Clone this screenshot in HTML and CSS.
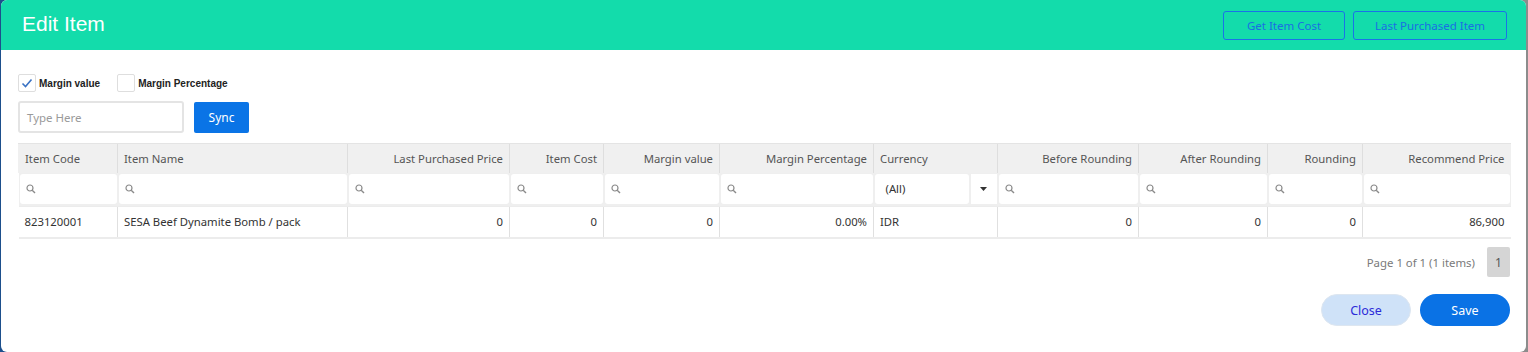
FILE: index.html
```html
<!DOCTYPE html>
<html>
<head>
<meta charset="utf-8">
<link rel="stylesheet" href="styles.css">
</head>
<body>
<div class="modal">
  <div class="modal-header">
    <h1 class="title">Edit Item</h1>
    <div class="header-actions">
      <button class="btn-outline btn-cost">Get Item Cost</button>
      <button class="btn-outline btn-last">Last Purchased Item</button>
    </div>
  </div>
  <div class="modal-body">
    <div class="checks">
      <label class="check">
        <span class="box">
          <svg width="14" height="14" viewBox="0 0 14 14"><path d="M2.5 7.5 L5.5 10.5 L11.5 3.5" fill="none" stroke="#3b73c4" stroke-width="1.6"/></svg>
        </span>
        <span class="check-label">Margin value</span>
      </label>
      <label class="check">
        <span class="box"></span>
        <span class="check-label">Margin Percentage</span>
      </label>
    </div>
    <div class="sync-row">
      <div class="text-input">Type Here</div>
      <button class="btn-sync">Sync</button>
    </div>
    <table class="grid">
      <colgroup>
        <col style="width:99px"><col style="width:230px"><col style="width:162px"><col style="width:94px"><col style="width:116px"><col style="width:154px"><col style="width:124px"><col style="width:141px"><col style="width:129px"><col style="width:95px"><col style="width:148px">
      </colgroup>
      <thead>
        <tr class="head">
          <th>Item Code</th>
          <th>Item Name</th>
          <th class="r">Last Purchased Price</th>
          <th class="r">Item Cost</th>
          <th class="r">Margin value</th>
          <th class="r">Margin Percentage</th>
          <th>Currency</th>
          <th class="r">Before Rounding</th>
          <th class="r">After Rounding</th>
          <th class="r">Rounding</th>
          <th class="r">Recommend Price</th>
        </tr>
        <tr class="filter">
          <td><div class="fbox"><svg class="mag" width="10" height="10" viewBox="0 0 10 10"><circle cx="4" cy="4" r="3" fill="none" stroke="#8a8a8a" stroke-width="1.2"/><path d="M6.2 6.2 L9 9" stroke="#8a8a8a" stroke-width="1.4"/></svg></div></td>
          <td><div class="fbox"><svg class="mag" width="10" height="10" viewBox="0 0 10 10"><circle cx="4" cy="4" r="3" fill="none" stroke="#8a8a8a" stroke-width="1.2"/><path d="M6.2 6.2 L9 9" stroke="#8a8a8a" stroke-width="1.4"/></svg></div></td>
          <td><div class="fbox"><svg class="mag" width="10" height="10" viewBox="0 0 10 10"><circle cx="4" cy="4" r="3" fill="none" stroke="#8a8a8a" stroke-width="1.2"/><path d="M6.2 6.2 L9 9" stroke="#8a8a8a" stroke-width="1.4"/></svg></div></td>
          <td><div class="fbox"><svg class="mag" width="10" height="10" viewBox="0 0 10 10"><circle cx="4" cy="4" r="3" fill="none" stroke="#8a8a8a" stroke-width="1.2"/><path d="M6.2 6.2 L9 9" stroke="#8a8a8a" stroke-width="1.4"/></svg></div></td>
          <td><div class="fbox"><svg class="mag" width="10" height="10" viewBox="0 0 10 10"><circle cx="4" cy="4" r="3" fill="none" stroke="#8a8a8a" stroke-width="1.2"/><path d="M6.2 6.2 L9 9" stroke="#8a8a8a" stroke-width="1.4"/></svg></div></td>
          <td><div class="fbox"><svg class="mag" width="10" height="10" viewBox="0 0 10 10"><circle cx="4" cy="4" r="3" fill="none" stroke="#8a8a8a" stroke-width="1.2"/><path d="M6.2 6.2 L9 9" stroke="#8a8a8a" stroke-width="1.4"/></svg></div></td>
          <td><div class="selbox"><div class="sel-val">(All)</div><div class="sel-arrow"><svg width="7" height="4" viewBox="0 0 7 4"><path d="M0 0 H7 L3.5 4 Z" fill="#333"/></svg></div></div></td>
          <td><div class="fbox"><svg class="mag" width="10" height="10" viewBox="0 0 10 10"><circle cx="4" cy="4" r="3" fill="none" stroke="#8a8a8a" stroke-width="1.2"/><path d="M6.2 6.2 L9 9" stroke="#8a8a8a" stroke-width="1.4"/></svg></div></td>
          <td><div class="fbox"><svg class="mag" width="10" height="10" viewBox="0 0 10 10"><circle cx="4" cy="4" r="3" fill="none" stroke="#8a8a8a" stroke-width="1.2"/><path d="M6.2 6.2 L9 9" stroke="#8a8a8a" stroke-width="1.4"/></svg></div></td>
          <td><div class="fbox"><svg class="mag" width="10" height="10" viewBox="0 0 10 10"><circle cx="4" cy="4" r="3" fill="none" stroke="#8a8a8a" stroke-width="1.2"/><path d="M6.2 6.2 L9 9" stroke="#8a8a8a" stroke-width="1.4"/></svg></div></td>
          <td><div class="fbox"><svg class="mag" width="10" height="10" viewBox="0 0 10 10"><circle cx="4" cy="4" r="3" fill="none" stroke="#8a8a8a" stroke-width="1.2"/><path d="M6.2 6.2 L9 9" stroke="#8a8a8a" stroke-width="1.4"/></svg></div></td>
        </tr>
      </thead>
      <tbody>
        <tr class="data">
          <td>823120001</td>
          <td>SESA Beef Dynamite Bomb / pack</td>
          <td class="r">0</td>
          <td class="r">0</td>
          <td class="r">0</td>
          <td class="r">0.00%</td>
          <td>IDR</td>
          <td class="r">0</td>
          <td class="r">0</td>
          <td class="r">0</td>
          <td class="r">86,900</td>
        </tr>
      </tbody>
    </table>
    <div class="pager">
      <span class="page-info">Page 1 of 1 (1 items)</span>
      <span class="page-num">1</span>
    </div>
    <div class="footer">
      <button class="btn-close">Close</button>
      <button class="btn-save">Save</button>
    </div>
  </div>
</div>
</body>
</html>
```

FILE: styles.css
```css
* { box-sizing: border-box; }
html, body { margin: 0; padding: 0; }
body {
  width: 1528px;
  height: 352px;
  overflow: hidden;
  background: linear-gradient(to right, #1d4f8c 0, #1d4f8c 50%, #8c8c8c 50%, #8c8c8c 100%);
  font-family: "Noto Sans", "Open Sans", sans-serif;
}
.modal {
  margin-left: 1px;
  width: 1525px;
  height: 352px;
  background: #fff;
  border-radius: 6px;
  overflow: hidden;
  display: flex;
  flex-direction: column;
}
.modal-header {
  height: 50px;
  background: #13dcab;
  display: flex;
  align-items: center;
  justify-content: space-between;
  padding: 0 19px 0 21px;
}
.title {
  margin: 0;
  font-family: "Liberation Sans", Arial, sans-serif;
  font-weight: normal;
  font-size: 21px;
  color: #fff;
  position: relative;
  top: -1px;
}
.header-actions {
  display: flex;
  gap: 8px;
  margin-top: 1px;
}
.btn-outline {
  height: 29px;
  background: transparent;
  border: 1px solid #1a73e8;
  border-radius: 3px;
  color: #1a6fe3;
  font-family: "Noto Sans", sans-serif;
  font-size: 11.5px;
  padding: 0;
}
.btn-cost { width: 122px; }
.btn-last { width: 154px; }
.modal-body {
  padding: 24px 16px 0 17px;
  display: flex;
  flex-direction: column;
}
.checks {
  display: flex;
  gap: 17px;
  height: 18px;
}
.check {
  display: flex;
  align-items: center;
  gap: 3px;
}
.box {
  width: 18px;
  height: 18px;
  border: 1px solid #dedede;
  border-radius: 2px;
  display: flex;
  align-items: center;
  justify-content: center;
  background: #fff;
}
.check-label {
  font-family: "Liberation Sans", Arial, sans-serif;
  font-weight: bold;
  font-size: 10px;
  color: #222;
}
.sync-row {
  display: flex;
  align-items: center;
  gap: 10px;
  margin-top: 9px;
}
.text-input {
  width: 166px;
  height: 32px;
  border: 2px solid #e4e4e4;
  border-radius: 3px;
  padding-left: 7px;
  display: flex;
  align-items: center;
  font-size: 11.5px;
  color: #9a9a9a;
}
.btn-sync {
  width: 55px;
  height: 31px;
  background: #0a74e6;
  border: none;
  border-radius: 2px;
  color: #fff;
  font-family: "Noto Sans", sans-serif;
  font-size: 12px;
  padding: 0;
}
.grid {
  margin-top: 10px;
  width: 1492px;
  table-layout: fixed;
  border-collapse: collapse;
  font-size: 11.3px;
}
.grid th, .grid td {
  padding: 0 6px;
  text-align: left;
  white-space: nowrap;
  overflow: hidden;
}
.grid .r { text-align: right; }
.head th {
  height: 29px;
  background: #f0f0f0;
  color: #555;
  font-weight: normal;
  border-left: 1px solid #dedede;
  border-top: 1px solid #e4e4e4;
}
.head th:first-child { border-left: 1px solid #f0f0f0; }
.filter td {
  height: 33px;
  background: #efefef;
  padding: 1px 1px 2px 1px;
}
.fbox {
  height: 30px;
  background: #fff;
  border-radius: 3px;
  display: flex;
  align-items: center;
  padding-left: 6px;
}
.selbox {
  height: 30px;
  display: flex;
  gap: 2px;
}
.sel-val {
  flex: 1;
  background: #fff;
  border-radius: 3px;
  display: flex;
  align-items: center;
  padding-left: 11px;
  font-size: 11.3px;
  color: #333;
}
.sel-arrow {
  width: 26px;
  background: #fff;
  display: flex;
  align-items: center;
  justify-content: center;
}
.data td {
  height: 32px;
  color: #333;
  border-left: 1px solid #e0e0e0;
  border-bottom: 2px solid #ececec;
  border-top: 1px solid #ececec;
}
.data td:first-child { border-left: none; }
.pager {
  display: flex;
  justify-content: flex-end;
  align-items: center;
  gap: 12px;
  margin-top: 8px;
  height: 30px;
}
.page-info {
  font-size: 11.4px;
  color: #7a7a7a;
}
.page-num {
  width: 23px;
  height: 30px;
  background: #d5d5d5;
  border-radius: 2px;
  display: flex;
  align-items: center;
  justify-content: center;
  font-size: 12px;
  color: #555;
}
.footer {
  display: flex;
  justify-content: flex-end;
  gap: 9px;
  margin-top: 17px;
}
.btn-close, .btn-save {
  width: 90px;
  height: 32px;
  border-radius: 16px;
  font-family: "Noto Sans", sans-serif;
  font-size: 12.5px;
  padding: 0;
}
.btn-close {
  background: #cfe2f8;
  border: 1px solid #dde6f0;
  color: #2b2bd8;
}
.btn-save {
  background: #0a72e5;
  border: none;
  color: #fff;
}
```
